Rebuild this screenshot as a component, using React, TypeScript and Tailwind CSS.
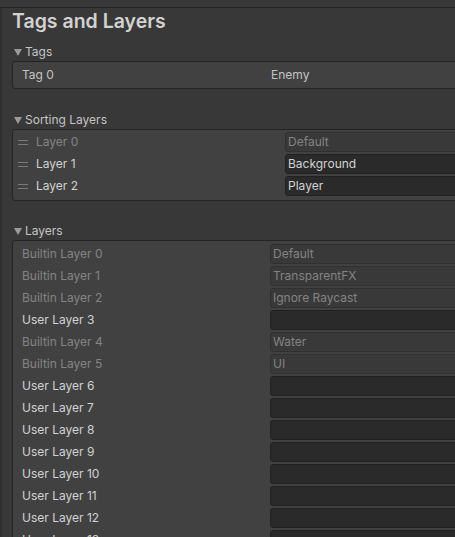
import React from "react";

const font = { fontFamily: "Inter, 'Noto Sans', sans-serif" };

function Triangle() {
  return (
    <svg width="8" height="7" viewBox="0 0 8 7" className="shrink-0">
      <path d="M0 0 L8 0 L4 7 Z" fill="#9a9a9a" />
    </svg>
  );
}

function Header({ title }: { title: string }) {
  return (
    <div className="flex h-[18px] items-center gap-[3px] pl-[12px] text-[12px] text-[#c4c4c4]">
      <Triangle />
      <span>{title}</span>
    </div>
  );
}

function Handle() {
  return (
    <div className="flex w-[10px] shrink-0 flex-col gap-[3px]">
      <div className="h-px bg-[#7a7a7a]" />
      <div className="h-px bg-[#7a7a7a]" />
    </div>
  );
}

function Field({ value, disabled }: { value: string; disabled?: boolean }) {
  return disabled ? (
    <div className="flex h-[20px] flex-1 items-center rounded-[3px] border border-[#303030] bg-[#393939] pl-[2px] text-[12px] text-[#838383]">
      {value}
    </div>
  ) : (
    <div className="flex h-[20px] flex-1 items-center rounded-[3px] border border-[#212121] bg-[#2a2a2a] pl-[2px] text-[12px] text-[#d2d2d2]">
      {value}
    </div>
  );
}

const sorting = [
  { name: "Layer 0", value: "Default", disabled: true },
  { name: "Layer 1", value: "Background", disabled: false },
  { name: "Layer 2", value: "Player", disabled: false },
];

const layers = [
  { name: "Builtin Layer 0", value: "Default", builtin: true },
  { name: "Builtin Layer 1", value: "TransparentFX", builtin: true },
  { name: "Builtin Layer 2", value: "Ignore Raycast", builtin: true },
  { name: "User Layer 3", value: "", builtin: false },
  { name: "Builtin Layer 4", value: "Water", builtin: true },
  { name: "Builtin Layer 5", value: "UI", builtin: true },
  { name: "User Layer 6", value: "", builtin: false },
  { name: "User Layer 7", value: "", builtin: false },
  { name: "User Layer 8", value: "", builtin: false },
  { name: "User Layer 9", value: "", builtin: false },
  { name: "User Layer 10", value: "", builtin: false },
  { name: "User Layer 11", value: "", builtin: false },
  { name: "User Layer 12", value: "", builtin: false },
  { name: "User Layer 13", value: "", builtin: false },
  { name: "User Layer 14", value: "", builtin: false },
];

export default function App() {
  return (
    <div
      className="h-[537px] w-[455px] overflow-hidden bg-[#383838]"
      style={font}
    >
      <div className="h-[7px] bg-[#383838]" />
      <div className="h-px bg-[#232323]" />
      <div className="border-l-2 border-[#2f2f2f]">
        <div className="flex h-[35px] items-start pl-[10px] pt-[1px] text-[19.5px] font-semibold leading-[24px] text-[#d2d2d2]">
          Tags and Layers
        </div>

        <Header title="Tags" />
        <div className="ml-[10px] mr-[-20px] flex h-[28px] items-center rounded-[3px] border border-[#242424] bg-[#414141] text-[12px] text-[#c4c4c4]">
          <div className="w-[258px] pl-[9px]">Tag 0</div>
          <div>Enemy</div>
        </div>

        <div className="h-[22px]" />
        <Header title="Sorting Layers" />
        <div className="ml-[10px] mr-[-20px] flex flex-col rounded-[3px] border border-[#242424] bg-[#414141] pb-[3px] pt-[1px]">
          {sorting.map((r) => (
            <div key={r.name} className="flex h-[22px] items-center">
              <div className="flex w-[272px] shrink-0 items-center gap-[8px] pl-[5px] text-[12px]">
                <Handle />
                <span className={r.disabled ? "text-[#848484]" : "text-[#d2d2d2]"}>
                  {r.name}
                </span>
              </div>
              <Field value={r.value} disabled={r.disabled} />
            </div>
          ))}
        </div>

        <div className="h-[21px]" />
        <Header title="Layers" />
        <div className="ml-[10px] mr-[-20px] flex flex-col rounded-[3px] border border-[#242424] bg-[#414141] pt-[2px]">
          {layers.map((r) => (
            <div key={r.name} className="flex h-[22px] items-center">
              <div
                className={
                  "w-[257px] shrink-0 pl-[9px] text-[12px] " +
                  (r.builtin ? "text-[#848484]" : "text-[#d2d2d2]")
                }
              >
                {r.name}
              </div>
              <Field value={r.value} disabled={r.builtin} />
            </div>
          ))}
        </div>
      </div>
    </div>
  );
}
